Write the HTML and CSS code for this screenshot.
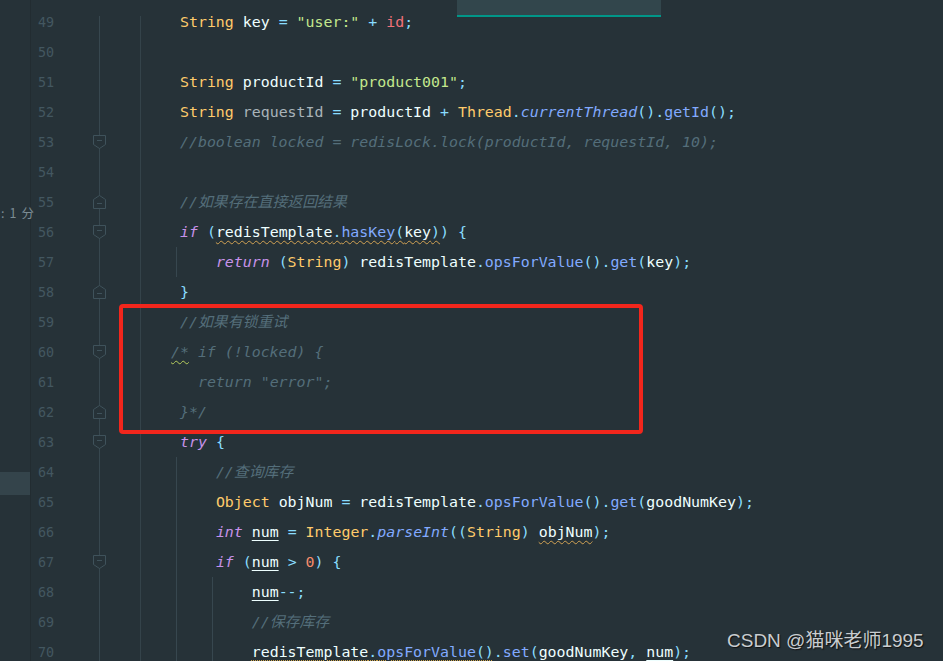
FILE: index.html
```html
<!DOCTYPE html>
<html lang="zh">
<head>
<meta charset="utf-8">
<title>Editor</title>
<link rel="stylesheet" href="styles.css">
</head>
<body>
<div class="editor">
  <div class="side">
    <div class="side-hint"><span>:</span><span>1</span><span>分</span></div>
    <div class="side-sel"></div>
  </div>
  <div class="rows">
    <div class="row"><span class="ln">49</span><span class="fold"></span><span class="code"><span class="t">String</span> <span class="v">key</span> <span class="o">=</span> <span class="s">"user:"</span> <span class="o">+</span> <span class="f">id</span><span class="o">;</span></span></div>
    <div class="row"><span class="ln">50</span><span class="fold"></span><span class="code"></span></div>
    <div class="row"><span class="ln">51</span><span class="fold"></span><span class="code"><span class="t">String</span> <span class="v">productId</span> <span class="o">=</span> <span class="s">"product001"</span><span class="o">;</span></span></div>
    <div class="row"><span class="ln">52</span><span class="fold"></span><span class="code"><span class="t">String</span> <span class="u">requestId</span> <span class="o">=</span> <span class="v">productId</span> <span class="o">+</span> <span class="t">Thread</span><span class="o">.</span><span class="mi">currentThread</span><span class="o">().</span><span class="m">getId</span><span class="o">();</span></span></div>
    <div class="row"><span class="ln">53</span><span class="fold"><svg class="mk" width="13" height="14" viewBox="0 0 13 14"><path d="M0.5 0.5H12.5V9.5L6.5 13.5L0.5 9.5Z"/><path d="M4 5.5H9"/></svg></span><span class="code"><span class="c">//boolean locked = redisLock.lock(productId, requestId, 10);</span></span></div>
    <div class="row"><span class="ln">54</span><span class="fold"></span><span class="code"></span></div>
    <div class="row"><span class="ln">55</span><span class="fold"><svg class="mk" width="13" height="14" viewBox="0 0 13 14"><path d="M6.5 0.5L12.5 4.5V13.5H0.5V4.5Z"/><path d="M4 8.5H9"/></svg></span><span class="code"><span class="c">//如果存在直接返回结果</span></span></div>
    <div class="row"><span class="ln">56</span><span class="fold"><svg class="mk" width="13" height="14" viewBox="0 0 13 14"><path d="M0.5 0.5H12.5V9.5L6.5 13.5L0.5 9.5Z"/><path d="M4 5.5H9"/></svg></span><span class="code"><span class="k">if</span> <span class="o">(</span><span class="w"><span class="v">redisTemplate</span><span class="o">.</span><span class="m">hasKey</span><span class="o">(</span><span class="v">key</span><span class="o">)</span></span><span class="o">)</span> <span class="o">{</span></span></div>
    <div class="row"><span class="ln">57</span><span class="fold"></span><span class="code g1">    <span class="k">return</span> <span class="o">(</span><span class="t">String</span><span class="o">)</span> <span class="v">redisTemplate</span><span class="o">.</span><span class="m">opsForValue</span><span class="o">().</span><span class="m">get</span><span class="o">(</span><span class="v">key</span><span class="o">);</span></span></div>
    <div class="row"><span class="ln">58</span><span class="fold"><svg class="mk" width="13" height="14" viewBox="0 0 13 14"><path d="M6.5 0.5L12.5 4.5V13.5H0.5V4.5Z"/><path d="M4 8.5H9"/></svg></span><span class="code"><span class="o">}</span></span></div>
    <div class="row"><span class="ln">59</span><span class="fold"></span><span class="code"><span class="c">//如果有锁重试</span></span></div>
    <div class="row"><span class="ln">60</span><span class="fold"><svg class="mk" width="13" height="14" viewBox="0 0 13 14"><path d="M0.5 0.5H12.5V9.5L6.5 13.5L0.5 9.5Z"/><path d="M4 5.5H9"/></svg></span><span class="code"><span class="c back"><span class="wg">/*</span> if (!locked) {</span></span></div>
    <div class="row"><span class="ln">61</span><span class="fold"></span><span class="code"><span class="c">  return "error";</span></span></div>
    <div class="row"><span class="ln">62</span><span class="fold"><svg class="mk" width="13" height="14" viewBox="0 0 13 14"><path d="M6.5 0.5L12.5 4.5V13.5H0.5V4.5Z"/><path d="M4 8.5H9"/></svg></span><span class="code"><span class="c">}*/</span></span></div>
    <div class="row"><span class="ln">63</span><span class="fold"><svg class="mk" width="13" height="14" viewBox="0 0 13 14"><path d="M0.5 0.5H12.5V9.5L6.5 13.5L0.5 9.5Z"/><path d="M4 5.5H9"/></svg></span><span class="code"><span class="k">try</span> <span class="o">{</span></span></div>
    <div class="row"><span class="ln">64</span><span class="fold"></span><span class="code g1">    <span class="c">//查询库存</span></span></div>
    <div class="row"><span class="ln">65</span><span class="fold"></span><span class="code g1">    <span class="t">Object</span> <span class="v">objNum</span> <span class="o">=</span> <span class="v">redisTemplate</span><span class="o">.</span><span class="m">opsForValue</span><span class="o">().</span><span class="m">get</span><span class="o">(</span><span class="v">goodNumKey</span><span class="o">);</span></span></div>
    <div class="row"><span class="ln">66</span><span class="fold"></span><span class="code g1">    <span class="k">int</span> <span class="v ul">num</span> <span class="o">=</span> <span class="t">Integer</span><span class="o">.</span><span class="mi">parseInt</span><span class="o">((</span><span class="t">String</span><span class="o">)</span> <span class="v w">objNum</span><span class="o">);</span></span></div>
    <div class="row"><span class="ln">67</span><span class="fold"><svg class="mk" width="13" height="14" viewBox="0 0 13 14"><path d="M0.5 0.5H12.5V9.5L6.5 13.5L0.5 9.5Z"/><path d="M4 5.5H9"/></svg></span><span class="code g1">    <span class="k">if</span> <span class="o">(</span><span class="v ul">num</span> <span class="o">&gt;</span> <span class="n">0</span><span class="o">)</span> <span class="o">{</span></span></div>
    <div class="row"><span class="ln">68</span><span class="fold"></span><span class="code g2">        <span class="v ul">num</span><span class="o">--;</span></span></div>
    <div class="row"><span class="ln">69</span><span class="fold"></span><span class="code g2">        <span class="c">//保存库存</span></span></div>
    <div class="row"><span class="ln">70</span><span class="fold"></span><span class="code g2">        <span class="dt"><span class="v">redisTemplate</span><span class="o">.</span><span class="m">opsForValue</span><span class="o">()</span></span><span class="o">.</span><span class="m">set</span><span class="o">(</span><span class="v">goodNumKey</span><span class="o">,</span> <span class="v ul">num</span><span class="o">);</span></span></div>
  </div>
  <div class="popup-strip"></div>
  <div class="annot"></div>
  <div class="watermark">CSDN @猫咪老师1995</div>
</div>
</body>
</html>
```
FILE: styles.css
```css
html, body {
  margin: 0;
  padding: 0;
  background: #263238;
}
body {
  width: 943px;
  height: 661px;
  overflow: hidden;
}
.editor {
  position: relative;
  display: flex;
  width: 943px;
  height: 661px;
  background: #263238;
  overflow: hidden;
}
.side {
  width: 30px;
  flex: none;
  border-right: 1px solid #222c31;
  display: flex;
  flex-direction: column;
}
.side-hint {
  margin-top: 204px;
  height: 18px;
  line-height: 18px;
  display: flex;
  gap: 5px;
  font-family: "Noto Sans CJK SC", "Noto Sans", sans-serif;
  font-size: 12.5px;
  color: #7c8c94;
  white-space: nowrap;
  padding-left: 1px;
}
.side-sel {
  margin-top: 250px;
  height: 23px;
  background: #34444b;
}
.rows {
  margin-top: 7px;
  flex: 1;
  display: flex;
  flex-direction: column;
  background:
    linear-gradient(#37474f, #37474f) 68px 9px / 1px 100% no-repeat,
    linear-gradient(#34434a, #34434a) 109px 9px / 1px 100% no-repeat;
}
.row {
  display: flex;
  align-items: center;
  height: 30px;
  flex: none;
}
.ln {
  width: 23px;
  flex: none;
  text-align: right;
  font-family: "DejaVu Sans Mono", "Liberation Mono", monospace;
  font-size: 13.4px;
  color: #435760;
}
.fold {
  margin-left: 39px;
  width: 13px;
  height: 14px;
  flex: none;
  display: flex;
}
.mk {
  fill: #263238;
  stroke: #3f525b;
  stroke-width: 1;
}
.code {
  margin-left: 35px;
  padding-left: 39px;
  height: 30px;
  line-height: 30px;
  flex: 1;
  white-space: pre;
  font-family: "DejaVu Sans Mono", "Liberation Mono", "Noto Sans CJK SC", monospace;
  font-size: 14.9px;
  color: #eeffff;
}
.code.g1 {
  background: linear-gradient(#37474f, #37474f) 35px 0 / 1px 100% no-repeat;
}
.code.g2 {
  background:
    linear-gradient(#37474f, #37474f) 35px 0 / 1px 100% no-repeat,
    linear-gradient(#37474f, #37474f) 71px 0 / 1px 100% no-repeat;
}
.t { color: #ffcb6b; }
.v { color: #eeffff; }
.o { color: #89ddff; }
.s { color: #c3e88d; }
.f { color: #f07178; }
.m { color: #82aaff; }
.mi { color: #82aaff; font-style: italic; }
.k { color: #c792ea; font-style: italic; }
.n { color: #f78c6c; }
.u { color: #a9b4ba; }
.c {
  color: #546e7a;
  font-style: italic;
  font-family: "DejaVu Sans Mono", "Noto Sans CJK SC", monospace;
}
.back { margin-left: -9px; }
.ul {
  text-decoration: underline solid #eeffff 1px;
  text-underline-offset: 3px;
}
.w {
  text-decoration: underline wavy #d1a253 1px;
  text-underline-offset: 3px;
}
.wg {
  text-decoration: underline wavy #b5cc5c 1px;
  text-underline-offset: 3px;
}
.dt {
  text-decoration: underline dotted #cfa54f 1px;
  text-underline-offset: 3px;
}
.popup-strip {
  position: absolute;
  left: 457px;
  top: 0;
  width: 204px;
  height: 15px;
  background: #32464c;
  border-bottom: 2px solid #009688;
}
.annot {
  position: absolute;
  left: 119px;
  top: 304px;
  width: 516px;
  height: 122px;
  border: 4px solid #f2261c;
  border-radius: 4px;
}
.watermark {
  position: absolute;
  left: 727px;
  top: 628px;
  font-family: "Liberation Sans", "Noto Sans CJK SC", sans-serif;
  font-size: 19px;
  line-height: 26px;
  color: #c9cdd0;
  text-shadow: 1px 1px 1px #111;
  white-space: nowrap;
}
```
